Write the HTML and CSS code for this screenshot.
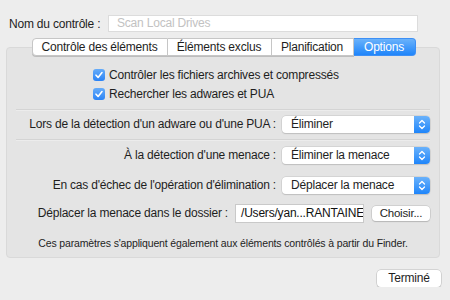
FILE: index.html
```html
<!DOCTYPE html>
<html lang="fr">
<head>
  <meta charset="UTF-8">
  <title>Options du contrôle</title>
  <link rel="stylesheet" href="styles.css">
</head>
<body>
  <div class="sheet">
    <div class="name-row">
      <label class="name-label">Nom du contrôle :</label>
      <div class="name-field">Scan Local Drives</div>
    </div>

    <div class="tabs">
      <div class="tab tab-1">Contrôle des éléments</div>
      <div class="tab tab-2">Éléments exclus</div>
      <div class="tab tab-3">Planification</div>
      <div class="tab tab-4 selected">Options</div>
    </div>

    <div class="panel">
      <div class="check-row">
        <span class="check"><svg viewBox="0 0 12 12" width="12" height="12"><path d="M3 6.2 L5.1 8.4 L9 3.6" fill="none" stroke="#fff" stroke-width="1.6" stroke-linecap="round" stroke-linejoin="round"/></svg></span>
        <span>Contrôler les fichiers archives et compressés</span>
      </div>
      <div class="check-row">
        <span class="check"><svg viewBox="0 0 12 12" width="12" height="12"><path d="M3 6.2 L5.1 8.4 L9 3.6" fill="none" stroke="#fff" stroke-width="1.6" stroke-linecap="round" stroke-linejoin="round"/></svg></span>
        <span>Rechercher les adwares et PUA</span>
      </div>

      <div class="separator sep-1"></div>

      <div class="form-row row-1">
        <span class="row-label">Lors de la détection d'un adware ou d'une PUA :</span>
        <div class="select">
          <span class="select-value">Éliminer</span>
          <span class="select-arrows"><svg viewBox="0 0 16 17" width="16" height="17"><path d="M5.5 7 L8 4.5 L10.5 7 M5.5 10 L8 12.5 L10.5 10" fill="none" stroke="#fff" stroke-width="1.3" stroke-linecap="round" stroke-linejoin="round"/></svg></span>
        </div>
      </div>

      <div class="separator sep-2"></div>

      <div class="form-row row-2">
        <span class="row-label">À la détection d'une menace :</span>
        <div class="select">
          <span class="select-value">Éliminer la menace</span>
          <span class="select-arrows"><svg viewBox="0 0 16 17" width="16" height="17"><path d="M5.5 7 L8 4.5 L10.5 7 M5.5 10 L8 12.5 L10.5 10" fill="none" stroke="#fff" stroke-width="1.3" stroke-linecap="round" stroke-linejoin="round"/></svg></span>
        </div>
      </div>

      <div class="form-row row-3">
        <span class="row-label">En cas d'échec de l'opération d'élimination :</span>
        <div class="select">
          <span class="select-value">Déplacer la menace</span>
          <span class="select-arrows"><svg viewBox="0 0 16 17" width="16" height="17"><path d="M5.5 7 L8 4.5 L10.5 7 M5.5 10 L8 12.5 L10.5 10" fill="none" stroke="#fff" stroke-width="1.3" stroke-linecap="round" stroke-linejoin="round"/></svg></span>
        </div>
      </div>

      <div class="form-row row-4">
        <span class="row-label">Déplacer la menace dans le dossier :</span>
        <div class="path-field">/Users/yan...RANTAINE</div>
        <div class="button choose">Choisir...</div>
      </div>

      <div class="note">Ces paramètres s'appliquent également aux éléments contrôlés à partir du Finder.</div>
    </div>

    <div class="footer">
      <div class="button done">Terminé</div>
    </div>
  </div>
</body>
</html>
```

FILE: styles.css
```css
body {
  margin: 0;
  background: #ededed;
  font-family: "Liberation Sans", Arial, sans-serif;
  font-size: 12px;
  letter-spacing: -0.2px;
  color: #1e1e1e;
}
.sheet {
  padding: 15px 10px 0 6px;
}
.name-row {
  display: flex;
  align-items: center;
  height: 17px;
  padding-left: 3px;
}
.name-label {
  width: 99px;
}
.name-field {
  width: 300px;
  height: 15px;
  line-height: 15px;
  padding-left: 8px;
  background: #fff;
  border: 1px solid #dcdcdc;
  color: #c2c2c2;
}
.tabs {
  position: relative;
  z-index: 1;
  display: flex;
  justify-content: center;
  margin-top: 6px;
  padding-left: 1px;
}
.tab {
  height: 16px;
  line-height: 16px;
  text-align: center;
  background: #fff;
  border: 1px solid #c6c6c6;
  border-left: none;
  box-shadow: 0 1px 0 #bdbdbd;
}
.tab-1 {
  width: 134px;
  border-left: 1px solid #c6c6c6;
  border-radius: 4px 0 0 4px;
}
.tab-2 { width: 103px; }
.tab-3 { width: 81px; }
.tab-4 {
  width: 61px;
  border-radius: 0 4px 4px 0;
}
.tab.selected {
  background: linear-gradient(#6ab2fb, #1f85fa);
  border-color: #3d8ff5;
  color: #fff;
  box-shadow: none;
}
.panel {
  margin-top: -9px;
  padding: 17px 0 6px;
  background: #e4e4e4;
  border: 1px solid #d9d9d9;
  border-radius: 4px;
}
.check-row {
  display: flex;
  align-items: center;
  gap: 4px;
  height: 19px;
  padding-left: 86px;
}
.check {
  width: 12px;
  height: 12px;
  border-radius: 3px;
  background: linear-gradient(#66acf9, #2a83f6);
  display: flex;
}
.separator {
  height: 1px;
  margin: 6px 9px 0 9px;
  background: #d4d4d4;
  border-bottom: 1px solid #ececec;
}
.form-row {
  display: flex;
  align-items: center;
  justify-content: flex-end;
  gap: 6px;
  height: 18px;
  padding-right: 9px;
}
.row-1 { margin-top: 4px; }
.row-2 { margin-top: 5px; }
.row-3 { margin-top: 12px; }
.row-4 {
  margin-top: 10px;
  gap: 7px;
}
.select {
  display: flex;
  width: 148px;
  height: 17px;
  background: #fff;
  border-radius: 4px;
  box-shadow: 0 0 0 0.5px #c4c4c4, 0 1px 1px #bdbdbd;
}
.select-value {
  flex: 1;
  padding-left: 9px;
  line-height: 17px;
}
.select-arrows {
  width: 16px;
  height: 17px;
  border-radius: 0 4px 4px 0;
  background: linear-gradient(#6ab2fb, #1f85fa);
  display: flex;
}
.path-field {
  width: 122px;
  height: 17px;
  line-height: 17px;
  padding-left: 5px;
  background: #fff;
  border: 1px solid #c9c9c9;
  color: #111;
  white-space: nowrap;
  overflow: hidden;
}
.button {
  height: 15px;
  line-height: 15px;
  text-align: center;
  background: #fff;
  border-radius: 4px;
  box-shadow: 0 0 0 0.5px #bcbcbc, 0 1px 1px #b4b4b4;
}
.choose {
  width: 58px;
  margin-left: 1px;
  font-size: 11.5px;
}
.note {
  margin-top: 13px;
  line-height: 16px;
  text-align: center;
  font-size: 10.5px;
  letter-spacing: -0.15px;
}
.footer {
  display: flex;
  justify-content: flex-end;
  margin-top: 12px;
  margin-right: -1px;
}
.done {
  width: 64px;
  height: 17px;
  line-height: 17px;
}
```
